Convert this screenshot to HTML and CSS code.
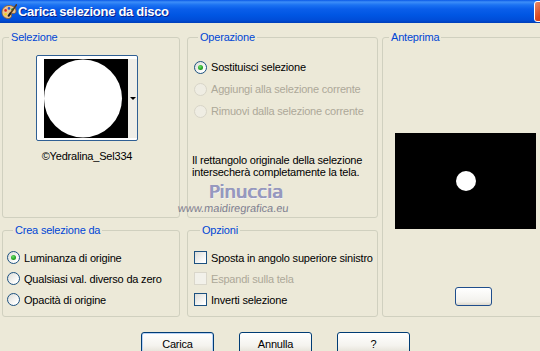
FILE: index.html
```html
<!DOCTYPE html>
<html lang="it">
<head>
<meta charset="utf-8">
<title>Carica selezione da disco</title>
<link rel="stylesheet" href="styles.css">
</head>
<body>
<div class="window">
  <div class="titlebar">
    <svg class="app-icon" width="16" height="16" viewBox="0 0 16 16">
      <path d="M8 1.5c4 0 7 2.3 7 5.6 0 2.2-1.6 2.6-3 2.3-1.3-.3-2 .5-1.6 1.7.5 1.4-.3 3.4-3 3.4C3.7 14.5 1 11.8 1 8.2 1 4.4 4 1.5 8 1.5z" fill="#E9C48E" stroke="#8A5A2B" stroke-width="0.8"/>
      <circle cx="4.6" cy="6.4" r="1.3" fill="#E02020"/>
      <circle cx="8" cy="4.4" r="1.3" fill="#2050E0"/>
      <circle cx="11.4" cy="5.4" r="1.2" fill="#20A030"/>
      <circle cx="4.6" cy="10.2" r="1.3" fill="#F0D020"/>
      <path d="M15.5 0.8 8.8 10.2" stroke="#5A3A1A" stroke-width="1.6" stroke-linecap="round"/>
      <path d="M9.3 9.4 7.6 11.8" stroke="#222" stroke-width="2" stroke-linecap="round"/>
    </svg>
    <span class="title">Carica selezione da disco</span>
    <span class="close"></span>
  </div>
  <div class="client">
    <div class="groups">
      <fieldset class="group g-sel">
        <legend>Selezione</legend>
        <div class="thumb">
          <svg class="thumb-img" width="84" height="79" viewBox="0 0 84 79">
            <rect width="84" height="79" fill="#000"/>
            <circle cx="39" cy="39.5" r="39" fill="#fff"/>
          </svg>
          <div class="thumb-drop"><span class="arrow"></span></div>
        </div>
        <div class="thumb-name">©Yedralina_Sel334</div>
      </fieldset>

      <fieldset class="group g-op">
        <legend>Operazione</legend>
        <div class="opts">
          <label class="opt"><span class="radio on"></span>Sostituisci selezione</label>
          <label class="opt disabled"><span class="radio"></span>Aggiungi alla selezione corrente</label>
          <label class="opt disabled"><span class="radio"></span>Rimuovi dalla selezione corrente</label>
        </div>
        <p class="note">Il rettangolo originale della selezione intersecherà completamente la tela.</p>
      </fieldset>

      <fieldset class="group g-prev">
        <legend>Anteprima</legend>
        <svg class="preview" width="141" height="96" viewBox="0 0 141 96">
          <rect width="141" height="96" fill="#000"/>
          <circle cx="71" cy="48" r="10" fill="#fff"/>
        </svg>
        <span class="mini-btn"></span>
      </fieldset>

      <fieldset class="group g-crea">
        <legend>Crea selezione da</legend>
        <div class="opts tight">
          <label class="opt"><span class="radio on"></span>Luminanza di origine</label>
          <label class="opt"><span class="radio"></span>Qualsiasi val. diverso da zero</label>
          <label class="opt"><span class="radio"></span>Opacità di origine</label>
        </div>
      </fieldset>

      <fieldset class="group g-opt">
        <legend>Opzioni</legend>
        <div class="opts tight">
          <label class="opt"><span class="check"></span>Sposta in angolo superiore sinistro</label>
          <label class="opt disabled"><span class="check"></span>Espandi sulla tela</label>
          <label class="opt"><span class="check"></span>Inverti selezione</label>
        </div>
      </fieldset>
    </div>

    <div class="buttons">
      <span class="btn default">Carica</span>
      <span class="btn">Annulla</span>
      <span class="btn">?</span>
    </div>

    <div class="watermark">
      <div class="wm-name">Pinuccia</div>
      <div class="wm-url">www.maidiregrafica.eu</div>
    </div>
  </div>
</div>
</body>
</html>
```

FILE: styles.css
```css
html, body {
  margin: 0;
  padding: 0;
  overflow: hidden;
  background: #ECE9D8;
}

.window {
  width: 540px;
  height: 351px;
  overflow: hidden;
  font-family: "Liberation Sans", Arial, sans-serif;
  font-size: 11px;
  letter-spacing: -0.2px;
  color: #000;
}

.titlebar {
  width: 560px;
  height: 23px;
  box-sizing: border-box;
  display: flex;
  align-items: center;
  padding-left: 1px;
  background: linear-gradient(#0A58E6 0, #3D8EF8 2px, #1B72F2 5px, #0A5EEA 9px, #0056E3 15px, #004DD8 20px, #003EB8 23px);
}

.app-icon {
  flex: none;
  margin-top: 1px;
}

.title {
  margin-left: 1px;
  color: #fff;
  font-weight: bold;
  font-size: 13px;
  letter-spacing: -0.3px;
  text-shadow: 1px 1px 0 #0A1E8C;
}

.close {
  margin-left: auto;
  margin-right: 5px;
  width: 21px;
  height: 21px;
  box-sizing: border-box;
  border: 1px solid #fff;
  border-radius: 3px;
  background: linear-gradient(135deg, #E88A6A, #D8471F 50%, #C23A14);
}

.client {
  position: relative;
  width: 560px;
  padding: 8px 0 0 2px;
}

.groups {
  display: grid;
  grid-template-columns: 178px 7px 191px 4px 171px;
  grid-template-rows: 187px 93px;
  row-gap: 6px;
}

.group {
  margin: 0;
  padding: 0;
  min-width: 0;
  box-sizing: border-box;
  border: 1px solid #D0D0BF;
  border-radius: 3px;
}

.group legend {
  margin-left: 6px;
  padding: 0 2px;
  line-height: 13px;
  color: #0046D5;
}

.g-sel { grid-column: 1; grid-row: 1; display: flex; flex-direction: column; align-items: center; padding-right: 8px; }
.g-op { grid-column: 3; grid-row: 1; padding-left: 4px; }
.g-prev { grid-column: 5; grid-row: 1 / 3; }
.g-crea { grid-column: 1; grid-row: 2; padding-left: 4px; }
.g-opt { grid-column: 3; grid-row: 2; padding-left: 6px; }

/* Selection thumbnail */
.thumb {
  margin-top: 11px;
  width: 102px;
  height: 86px;
  box-sizing: border-box;
  border: 1px solid #2F5F94;
  border-radius: 2px;
  background: #fff;
  display: flex;
  align-items: center;
  padding-left: 7px;
}

.thumb-img { display: block; flex: none; }

.thumb-drop {
  width: 9px;
  height: 79px;
  background: #EFEEE8;
  display: flex;
  align-items: center;
  justify-content: center;
}

.arrow {
  width: 0;
  height: 0;
  border-left: 3px solid transparent;
  border-right: 3px solid transparent;
  border-top: 3px solid #000;
  margin-left: 1px;
}

.thumb-name {
  margin-top: 9px;
  line-height: 13px;
}

/* Options */
.opts {
  display: flex;
  flex-direction: column;
  padding-top: 12px;
}

.g-op .opts { padding-left: 2px; }

.opt {
  display: flex;
  align-items: center;
  gap: 4px;
  height: 22px;
  white-space: nowrap;
}

.opts.tight { padding-top: 10px; }
.opts.tight .opt { height: 21px; }

.opt.disabled { color: #ACA899; }

.radio {
  flex: none;
  width: 13px;
  height: 13px;
  box-sizing: border-box;
  border: 1px solid #1C5180;
  border-radius: 50%;
  background: linear-gradient(135deg, #DCDCD7, #FFFFFF 80%);
  display: flex;
  align-items: center;
  justify-content: center;
}

.radio.on::after {
  content: "";
  width: 5px;
  height: 5px;
  border-radius: 50%;
  background: radial-gradient(circle at 40% 35%, #6BE06A, #21A121 60%, #168416);
}

.opt.disabled .radio {
  border-color: #D8D5C8;
  background: #EFEDE3;
}

.check {
  flex: none;
  width: 13px;
  height: 13px;
  box-sizing: border-box;
  border: 1px solid #1C5180;
  background: linear-gradient(135deg, #DCDCD7, #FFFFFF 85%);
}

.opt.disabled .check {
  border-color: #DAD7CB;
  background: #F2F1EA;
}

.note {
  margin: 32px 0 0;
  line-height: 12px;
  width: 180px;
}

/* Preview */
.preview {
  display: block;
  margin: 89px 0 0 12px;
}

.mini-btn {
  display: block;
  margin: 58px 0 0 72px;
  width: 37px;
  height: 19px;
  box-sizing: border-box;
  border: 1px solid #1F4E8C;
  border-radius: 3px;
  background: linear-gradient(#FFFFFF, #F2F1EC 80%, #DCD8CC);
}

/* Dialog buttons */
.buttons {
  display: flex;
  gap: 25px;
  margin: 15px 0 0 139px;
}

.btn {
  width: 73px;
  height: 23px;
  box-sizing: border-box;
  border: 1px solid #003C74;
  border-radius: 3px;
  background: linear-gradient(#FFFFFF, #F4F3EE 60%, #E6E3D9 90%, #D6D0C5);
  display: flex;
  align-items: center;
  justify-content: center;
  padding-top: 1px;
}

.btn.default {
  box-shadow: inset 0 0 0 1px #B8D2F5, inset 0 -1px 0 1px #8CB0EA;
}

/* Watermark */
.watermark {
  position: absolute;
  left: 178px;
  top: 159px;
  letter-spacing: 0;
}

.wm-name {
  margin-left: 31px;
  font-family: "DejaVu Sans", sans-serif;
  font-size: 18px;
  line-height: 20px;
  color: #9698BE;
  text-shadow: 0.6px 0 0 #9698BE, -0.4px 0 0 #9698BE, 1px 1px 0 #F4F4FA;
}

.wm-url {
  font-family: "Liberation Sans", Arial, sans-serif;
  font-size: 11px;
  line-height: 12px;
  color: #7F8090;
  transform: skewX(-6deg);
}
```
